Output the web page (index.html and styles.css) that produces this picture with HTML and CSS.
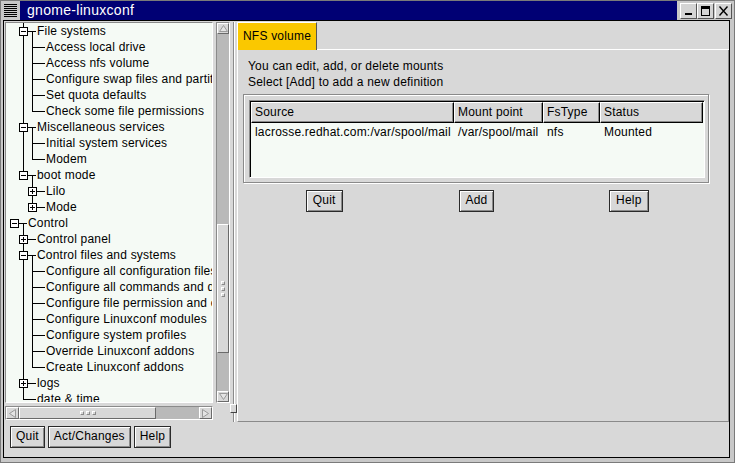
FILE: index.html
```html
<!DOCTYPE html>
<html lang="en">
<head>
    <meta charset="UTF-8">
    <title>gnome-linuxconf</title>
    <link rel="stylesheet" href="styles.css">
</head>
<body>
    <div class="window">
        <div class="titlebar">
            <div class="menu-btn"><span></span></div>
            <div class="title">gnome-linuxconf</div>
            <div class="wm-buttons">
                <span class="wm-btn"><svg width="15" height="14" viewBox="0 0 15 14"><rect x="4" y="9" width="7" height="2" fill="#000"/></svg></span>
                <span class="wm-btn"><svg width="15" height="14" viewBox="0 0 15 14"><rect x="3.5" y="2.5" width="8" height="9" fill="none" stroke="#000"/><rect x="3" y="2" width="9" height="3" fill="#000"/></svg></span>
                <span class="wm-btn"><svg width="15" height="14" viewBox="0 0 15 14"><path d="M3.5 2.5 L11.5 11.5 M11.5 2.5 L3.5 11.5" stroke="#000" stroke-width="1.4"/></svg></span>
            </div>
        </div>

        <div class="client">
            <div class="main">
                <!-- menu tree -->
                <div class="left-pane">
                    <div class="scroll-row">
                        <div class="tree">
                            <div class="row"><span class="g"></span><span class="g tee"><b class="box"></b></span><span class="g stub down"></span><span class="label">File systems</span></div>
                            <div class="row"><span class="g"></span><span class="g pipe"></span><span class="g tee"></span><span class="g stub"></span><span class="label">Access local drive</span></div>
                            <div class="row"><span class="g"></span><span class="g pipe"></span><span class="g tee"></span><span class="g stub"></span><span class="label">Access nfs volume</span></div>
                            <div class="row"><span class="g"></span><span class="g pipe"></span><span class="g tee"></span><span class="g stub"></span><span class="label">Configure swap files and partitions</span></div>
                            <div class="row"><span class="g"></span><span class="g pipe"></span><span class="g tee"></span><span class="g stub"></span><span class="label">Set quota defaults</span></div>
                            <div class="row"><span class="g"></span><span class="g pipe"></span><span class="g ell"></span><span class="g stub"></span><span class="label">Check some file permissions</span></div>
                            <div class="row"><span class="g"></span><span class="g tee"><b class="box"></b></span><span class="g stub down"></span><span class="label">Miscellaneous services</span></div>
                            <div class="row"><span class="g"></span><span class="g pipe"></span><span class="g tee"></span><span class="g stub"></span><span class="label">Initial system services</span></div>
                            <div class="row"><span class="g"></span><span class="g pipe"></span><span class="g ell"></span><span class="g stub"></span><span class="label">Modem</span></div>
                            <div class="row"><span class="g"></span><span class="g ell"><b class="box"></b></span><span class="g stub down"></span><span class="label">boot mode</span></div>
                            <div class="row"><span class="g"></span><span class="g"></span><span class="g tee"><b class="box plus"></b></span><span class="g stub"></span><span class="label">Lilo</span></div>
                            <div class="row"><span class="g"></span><span class="g"></span><span class="g ell"><b class="box plus"></b></span><span class="g stub"></span><span class="label">Mode</span></div>
                            <div class="row"><span class="g"><b class="box"></b></span><span class="g stub down"></span><span class="label">Control</span></div>
                            <div class="row"><span class="g"></span><span class="g tee"><b class="box plus"></b></span><span class="g stub"></span><span class="label">Control panel</span></div>
                            <div class="row"><span class="g"></span><span class="g tee"><b class="box"></b></span><span class="g stub down"></span><span class="label">Control files and systems</span></div>
                            <div class="row"><span class="g"></span><span class="g pipe"></span><span class="g tee"></span><span class="g stub"></span><span class="label">Configure all configuration files</span></div>
                            <div class="row"><span class="g"></span><span class="g pipe"></span><span class="g tee"></span><span class="g stub"></span><span class="label">Configure all commands and daemons</span></div>
                            <div class="row"><span class="g"></span><span class="g pipe"></span><span class="g tee"></span><span class="g stub"></span><span class="label">Configure file permission and ownership</span></div>
                            <div class="row"><span class="g"></span><span class="g pipe"></span><span class="g tee"></span><span class="g stub"></span><span class="label">Configure Linuxconf modules</span></div>
                            <div class="row"><span class="g"></span><span class="g pipe"></span><span class="g tee"></span><span class="g stub"></span><span class="label">Configure system profiles</span></div>
                            <div class="row"><span class="g"></span><span class="g pipe"></span><span class="g tee"></span><span class="g stub"></span><span class="label">Override Linuxconf addons</span></div>
                            <div class="row"><span class="g"></span><span class="g pipe"></span><span class="g ell"></span><span class="g stub"></span><span class="label">Create Linuxconf addons</span></div>
                            <div class="row"><span class="g"></span><span class="g tee"><b class="box plus"></b></span><span class="g stub"></span><span class="label">logs</span></div>
                            <div class="row"><span class="g"></span><span class="g ell"></span><span class="g stub"></span><span class="label">date &amp; time</span></div>
                        </div>

                        <div class="vscroll">
                            <div class="arrow"><svg width="9" height="7" viewBox="0 0 9 7"><polygon points="4.5,0.5 8.5,6.5 0.5,6.5" fill="#e4e4e4" stroke="#9a9a9a"/></svg></div>
                            <div class="trough v-before"></div>
                            <div class="slider"><span class="grip"><i></i><i></i><i></i></span></div>
                            <div class="trough fill"></div>
                            <div class="arrow"><svg width="9" height="7" viewBox="0 0 9 7"><polygon points="0.5,0.5 8.5,0.5 4.5,6.5" fill="#e4e4e4" stroke="#9a9a9a"/></svg></div>
                        </div>
                    </div>

                    <div class="hscroll">
                        <div class="arrow"><svg width="7" height="9" viewBox="0 0 7 9"><polygon points="0.5,4.5 6.5,0.5 6.5,8.5" fill="#e4e4e4" stroke="#9a9a9a"/></svg></div>
                        <div class="slider"><span class="grip"><i></i><i></i><i></i></span></div>
                        <div class="trough fill"></div>
                        <div class="arrow"><svg width="7" height="9" viewBox="0 0 7 9"><polygon points="0.5,0.5 6.5,4.5 0.5,8.5" fill="#e4e4e4" stroke="#9a9a9a"/></svg></div>
                    </div>
                </div>

                <div class="pane-sep"><span class="pane-handle"></span></div>

                <!-- NFS notebook -->
                <div class="notebook">
                    <div class="tabs">
                        <div class="tab">NFS volume</div>
                        <div class="tab-fill"></div>
                    </div>
                    <div class="page">
                        <div class="intro">
                            <p>You can edit, add, or delete mounts</p>
                            <p>Select [Add] to add a new definition</p>
                        </div>
                        <div class="frame-box">
                            <div class="mounts">
                                <div class="mounts-head">
                                    <div class="col-source">Source</div>
                                    <div class="col-point">Mount point</div>
                                    <div class="col-type">FsType</div>
                                    <div class="col-status">Status</div>
                                </div>
                                <div class="mounts-row">
                                    <div class="col-source">lacrosse.redhat.com:/var/spool/mail</div>
                                    <div class="col-point">/var/spool/mail</div>
                                    <div class="col-type">nfs</div>
                                    <div class="col-status">Mounted</div>
                                </div>
                            </div>
                        </div>
                        <div class="page-buttons">
                            <button class="btn">Quit</button>
                            <button class="btn">Add</button>
                            <button class="btn">Help</button>
                        </div>
                    </div>
                </div>
            </div>

            <div class="actions">
                <button class="btn small">Quit</button>
                <button class="btn small">Act/Changes</button>
                <button class="btn small">Help</button>
            </div>
        </div>
    </div>
</body>
</html>
```

FILE: styles.css
```css
* {
    box-sizing: border-box;
    margin: 0;
    padding: 0;
}

body {
    font-family: "Liberation Sans", Arial, sans-serif;
    font-size: 12px;
    letter-spacing: 0.2px;
    color: #000;
    background: #c8c8c8;
    overflow: hidden;
}

.window {
    width: 735px;
    height: 463px;
    border: 1px solid #7a7a7a;
    background: #c8c8c8;
    display: flex;
    flex-direction: column;
}

/* title bar */

.titlebar {
    height: 19px;
    display: flex;
    flex: none;
}

.menu-btn {
    width: 19px;
    height: 19px;
    background: #c8c8c8;
    display: flex;
    align-items: center;
    justify-content: center;
}

.menu-btn span {
    width: 13px;
    height: 13px;
    background: repeating-linear-gradient(#000 0 1px, transparent 1px 2px);
}

.title {
    flex: 1;
    background: #000074;
    color: #fff;
    font-size: 14px;
    letter-spacing: 0.3px;
    line-height: 19px;
    padding-left: 7px;
}

.wm-buttons {
    width: 57px;
    background: #c8c8c8;
    display: flex;
    padding: 2px 0 0 3px;
}

.wm-btn {
    width: 17px;
    height: 16px;
    background: #d4d4d4;
    border: 1px solid;
    border-color: #fff #555 #555 #fff;
    display: flex;
    align-items: center;
    justify-content: center;
}

.wm-btn + .wm-btn + .wm-btn {
    margin-left: 1px;
}

/* client area */

.client {
    flex: 1;
    margin: 0 4px 4px 2px;
    border: 1px solid #000;
    background: #d8d8d8;
    display: flex;
    flex-direction: column;
}

.main {
    display: flex;
    height: 400px;
    margin-top: 1px;
}

.left-pane {
    width: 226px;
    padding-left: 1px;
    display: flex;
    flex-direction: column;
}

.scroll-row {
    display: flex;
    gap: 3px;
    height: 381px;
}

.tree {
    width: 208px;
    height: 381px;
    overflow: hidden;
    border: 1px solid;
    border-color: #8a8a8a #fff #fff #8a8a8a;
    background: #f5faf5;
    padding-left: 4px;
}

.row {
    display: flex;
    height: 16px;
    line-height: 16px;
    white-space: nowrap;
}

.g {
    flex: none;
    width: 9px;
    height: 16px;
    background-repeat: no-repeat;
}

.pipe {
    background-image: linear-gradient(#000, #000);
    background-position: 4px 0;
    background-size: 1px 16px;
}

.tee {
    background-image: linear-gradient(#000, #000), linear-gradient(#000, #000);
    background-position: 4px 0, 4px 8px;
    background-size: 1px 16px, 5px 1px;
}

.ell {
    background-image: linear-gradient(#000, #000), linear-gradient(#000, #000);
    background-position: 4px 0, 4px 8px;
    background-size: 1px 9px, 5px 1px;
}

.stub {
    background-image: linear-gradient(#000, #000);
    background-position: 0 8px;
    background-size: 8px 1px;
}

.stub.down {
    background-image: linear-gradient(#000, #000), linear-gradient(#000, #000);
    background-position: 0 8px, 4px 8px;
    background-size: 8px 1px, 1px 8px;
}

.box {
    display: block;
    width: 9px;
    height: 9px;
    margin-top: 4px;
    border: 1px solid #000;
    background-color: #fff;
    background-image: linear-gradient(#000, #000);
    background-repeat: no-repeat;
    background-position: 1px 3px;
    background-size: 5px 1px;
}

.box.plus {
    background-image: linear-gradient(#000, #000), linear-gradient(#000, #000);
    background-position: 1px 3px, 3px 1px;
    background-size: 5px 1px, 1px 5px;
}

/* scrollbars */

.vscroll,
.hscroll {
    display: flex;
    border: 1px solid;
    border-color: #8a8a8a #fff #fff #8a8a8a;
    background: #b9b9b9;
}

.vscroll {
    width: 14px;
    flex-direction: column;
}

.hscroll {
    width: 208px;
    height: 14px;
    margin-top: 3px;
}

.arrow {
    flex: none;
    background: #d8d8d8;
    border: 1px solid;
    border-color: #fff #6a6a6a #6a6a6a #fff;
    display: flex;
    align-items: center;
    justify-content: center;
}

.vscroll .arrow {
    height: 11px;
}

.hscroll .arrow {
    width: 13px;
}

.v-before {
    height: 190px;
}

.trough.fill {
    flex: 1;
}

.slider {
    flex: none;
    background: #d8d8d8;
    border: 1px solid;
    border-color: #fff #6a6a6a #6a6a6a #fff;
    display: flex;
    align-items: center;
    justify-content: center;
}

.vscroll .slider {
    height: 129px;
}

.hscroll .slider {
    width: 137px;
}

.grip {
    display: flex;
    gap: 2px;
}

.vscroll .grip {
    flex-direction: column;
}

.grip i {
    width: 4px;
    height: 4px;
    border: 1px solid;
    border-color: #fff #8a8a8a #8a8a8a #fff;
}

/* paned separator */

.pane-sep {
    width: 7px;
    display: flex;
    flex-direction: column;
    justify-content: flex-end;
    padding-bottom: 9px;
    background-image: linear-gradient(#8a8a8a, #8a8a8a), linear-gradient(#fff, #fff);
    background-repeat: no-repeat;
    background-position: 3px 0, 4px 0;
    background-size: 1px 100%, 1px 100%;
}

.pane-handle {
    width: 7px;
    height: 9px;
    background: #d8d8d8;
    border: 1px solid;
    border-color: #fff #444 #444 #fff;
}

/* notebook */

.notebook {
    flex: 1;
    display: flex;
    flex-direction: column;
}

.tabs {
    display: flex;
    height: 28px;
}

.tab {
    background: #fac800;
    border-top: 1px solid #fff;
    border-left: 1px solid #fff;
    border-right: 1px solid #555;
    padding: 5px 5px 0 5px;
    line-height: 16px;
}

.tab-fill {
    flex: 1;
    border-bottom: 1px solid #fff;
}

.page {
    flex: 1;
    border: 1px solid;
    border-top: none;
    border-color: #fff #8a8a8a #8a8a8a #fff;
    padding: 8px 0 0 5px;
}

.intro {
    padding-left: 5px;
    line-height: 16px;
}

.frame-box {
    width: 466px;
    height: 89px;
    margin-top: 4px;
    border: 1px solid #8a8a8a;
    box-shadow: inset 1px 1px 0 #fff, 1px 1px 0 #fff;
    padding: 5px 3px 4px 5px;
}

.mounts {
    height: 78px;
    border: 1px solid;
    border-color: #8a8a8a #fff #fff #8a8a8a;
    box-shadow: inset 1px 1px 0 #000;
    background: #f5faf5;
    padding: 1px 0 0 1px;
}

.mounts-head,
.mounts-row {
    display: flex;
    white-space: nowrap;
}

.mounts-head div {
    height: 21px;
    line-height: 19px;
    padding-left: 3px;
    background: #d8d8d8;
    border: 1px solid;
    border-color: #fff #000 #000 #fff;
    box-shadow: inset -1px -1px 0 #8a8a8a;
}

.mounts-row {
    margin-top: 1px;
    line-height: 16px;
}

.mounts-row div {
    padding-left: 4px;
    overflow: hidden;
}

.col-source { width: 203px; }
.col-point { width: 89px; }
.col-type { width: 57px; }
.col-status { width: 103px; }

.page-buttons {
    width: 457px;
    margin: 7px 0 0 5px;
    display: grid;
    grid-template-columns: repeat(3, 1fr);
    justify-items: center;
}

.btn {
    font: inherit;
    letter-spacing: inherit;
    color: #000;
    height: 22px;
    line-height: 19px;
    padding: 0 6px 1px;
    background: #d8d8d8;
    border: 1px solid #2a2a2a;
    box-shadow: inset 1px 1px 0 #fff, inset -1px -1px 0 #8a8a8a;
}

.actions {
    display: flex;
    gap: 3px;
    margin-top: 4px;
    padding-left: 6px;
}

.btn.small {
    padding: 0 5px 1px;
}
```
